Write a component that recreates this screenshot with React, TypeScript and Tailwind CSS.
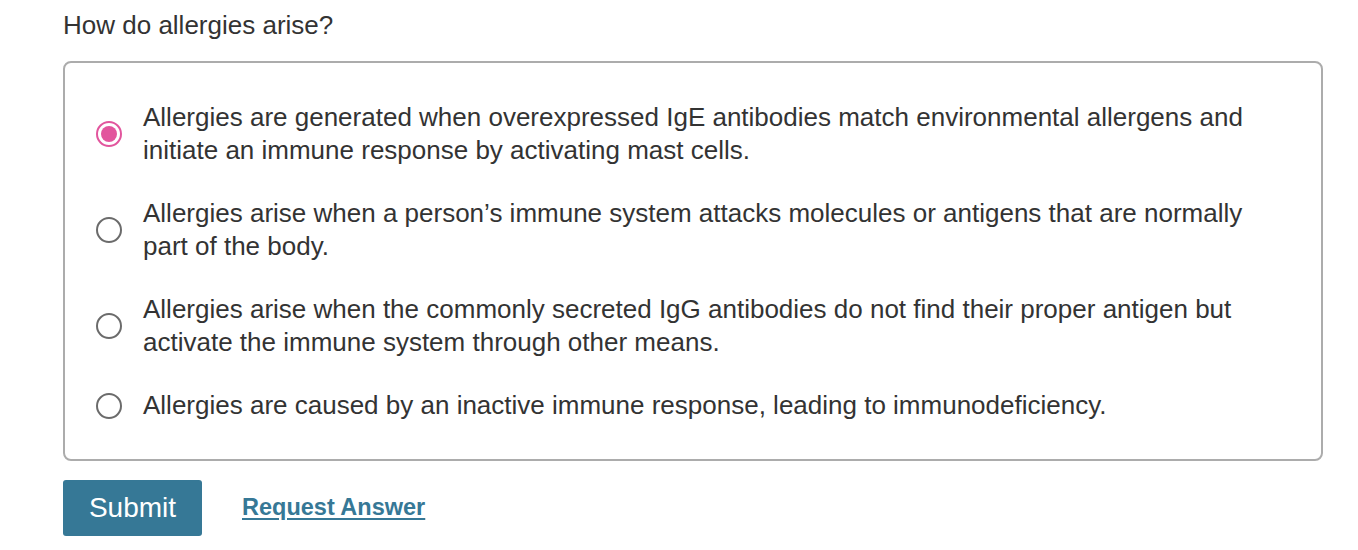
const OPTIONS = [
  "Allergies are generated when overexpressed IgE antibodies match environmental allergens and initiate an immune response by activating mast cells.",
  "Allergies arise when a person\u2019s immune system attacks molecules or antigens that are normally part of the body.",
  "Allergies arise when the commonly secreted IgG antibodies do not find their proper antigen but activate the immune system through other means.",
  "Allergies are caused by an inactive immune response, leading to immunodeficiency.",
]

function Radio({ checked }: { checked: boolean }) {
  if (checked) {
    return (
      <span className="flex h-[26px] w-[26px] shrink-0 items-center justify-center rounded-full border-[2px] border-[#e2559d] bg-white">
        <span className="h-[16px] w-[16px] rounded-full bg-[#e2559d]" />
      </span>
    )
  }
  return <span className="h-[26px] w-[26px] shrink-0 rounded-full border-[2px] border-[#6b6b6b] bg-white" />
}

export default function App() {
  return (
    <div className="min-h-[550px] bg-white pl-[63px] pt-[9px] text-[#333333] [font-family:'Liberation_Sans',Arial,sans-serif]">
      <h1 className="text-[26px] leading-[32px]">How do allergies arise?</h1>

      <div className="mt-[20px] w-[1260px] rounded-[8px] border-[2px] border-[#acacac] pb-[37px] pl-[31px] pr-[71px] pt-[38px]">
        <div className="flex flex-col gap-[30px]">
          {OPTIONS.map((text, i) => (
            <label key={i} className="flex items-center gap-[21px]">
              <Radio checked={i === 0} />
              <span className="text-[26px] leading-[33px]">{text}</span>
            </label>
          ))}
        </div>
      </div>

      <div className="mt-[19px] flex items-center gap-[40px]">
        <button className="h-[56px] w-[139px] rounded-[3px] bg-[#367896] text-[28px] text-white">Submit</button>
        <a className="text-[23.5px] font-bold text-[#367896] underline underline-offset-[3px]">Request Answer</a>
      </div>
    </div>
  )
}
